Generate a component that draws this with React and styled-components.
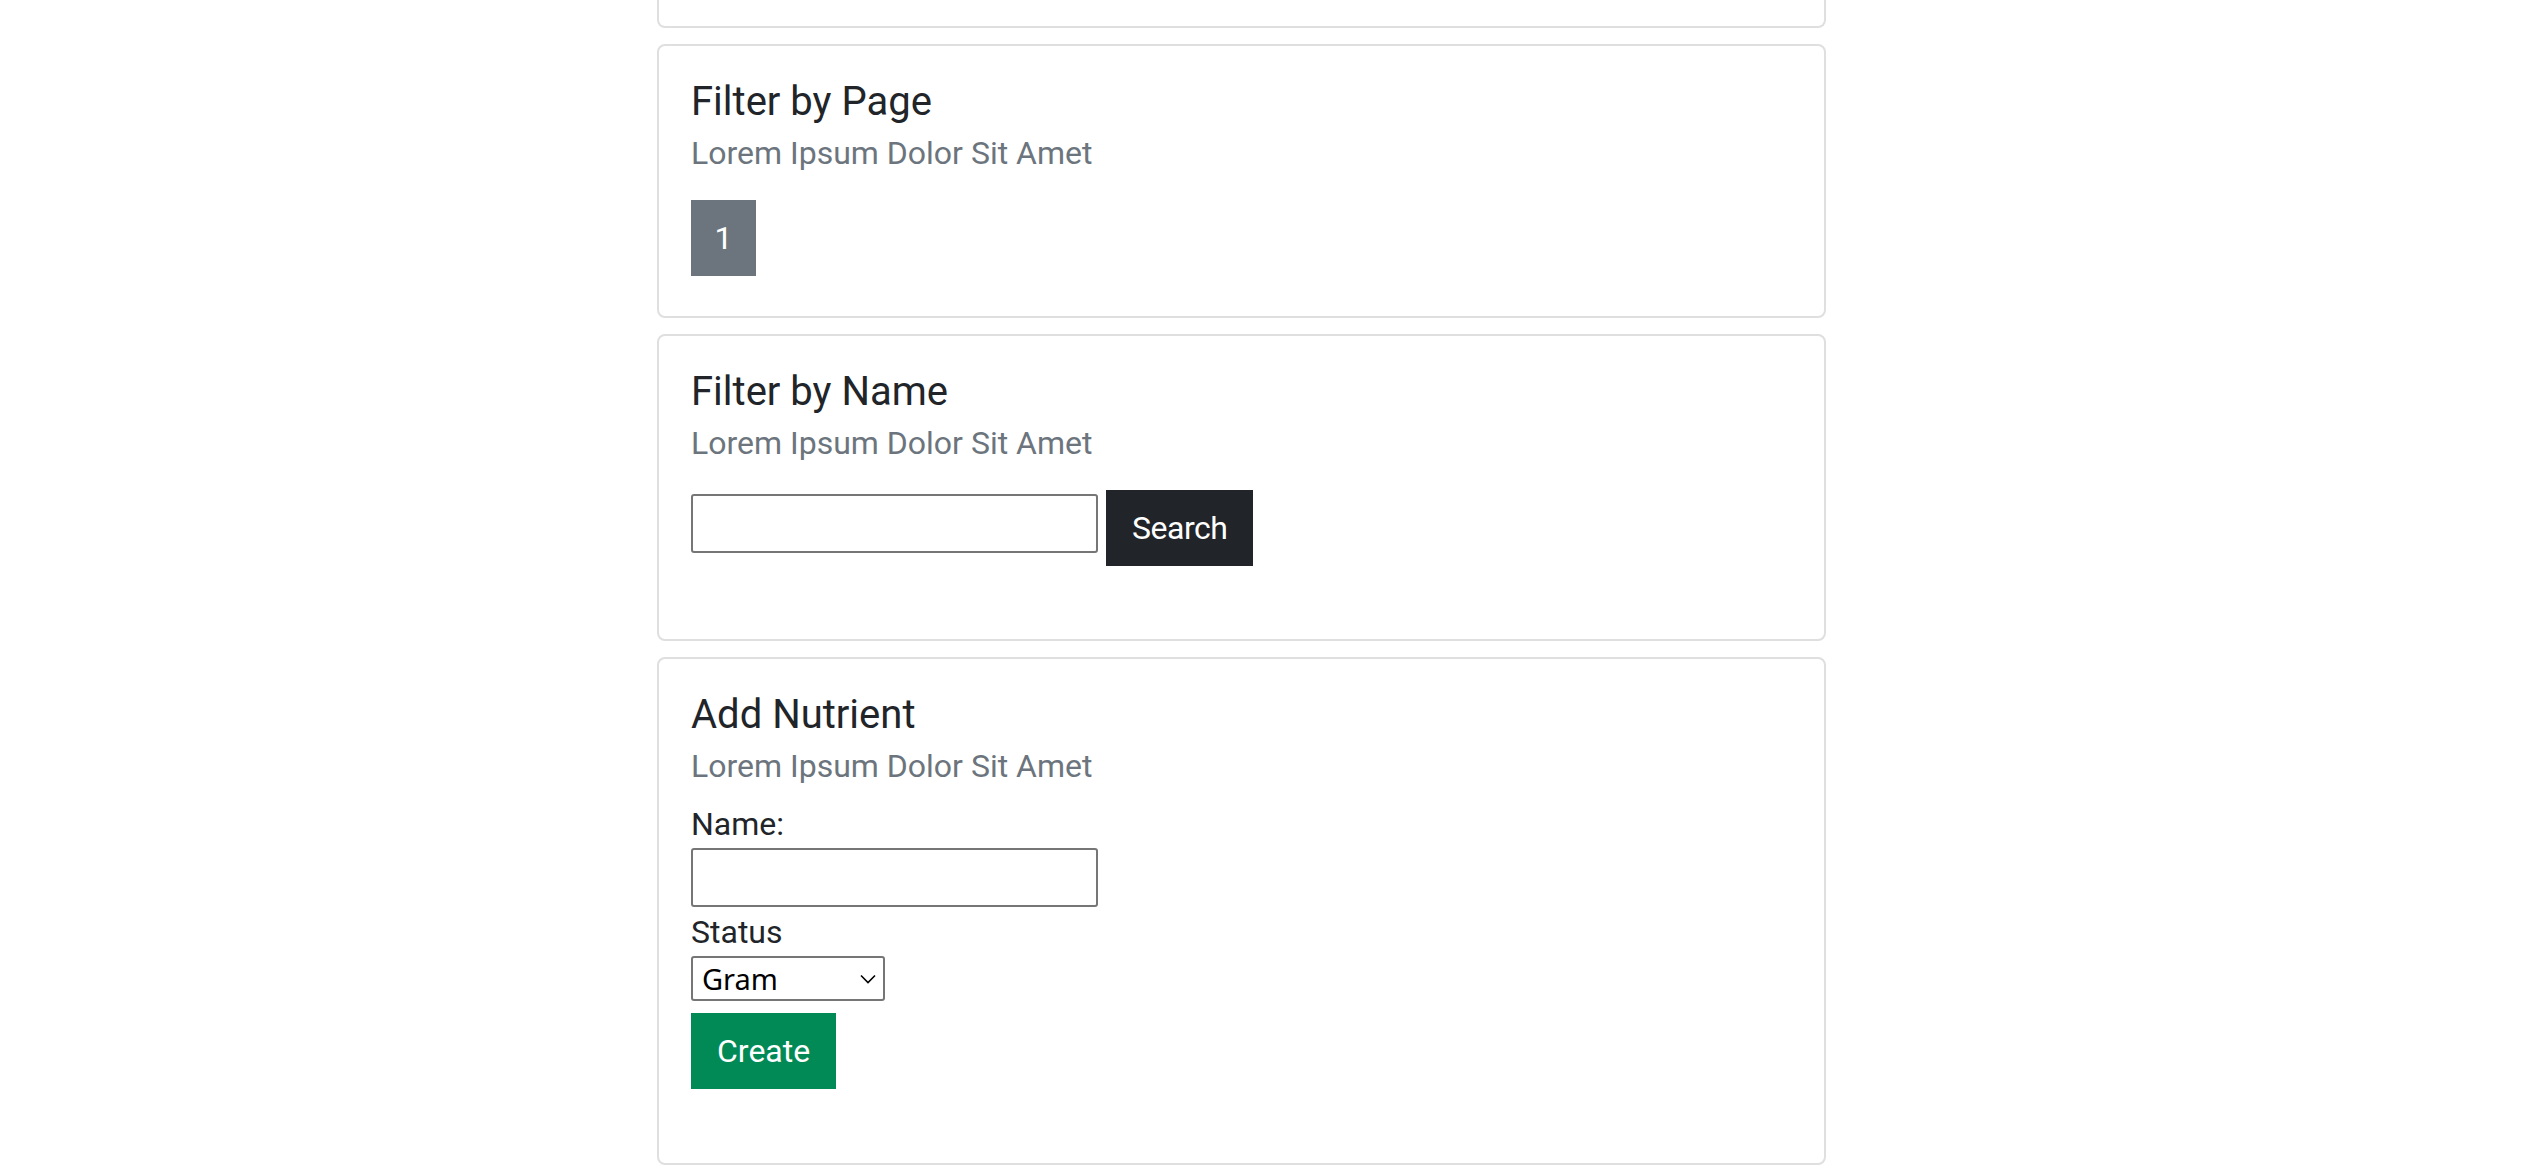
import React from 'react';
import styled, { createGlobalStyle } from 'styled-components';

const GlobalStyle = createGlobalStyle`
  html, body {
    margin: 0;
    padding: 0;
    background: #ffffff;
    overflow: hidden;
  }
  body {
    font-family: Roboto, "Liberation Sans", sans-serif;
    color: #212529;
  }
  *, *::before, *::after {
    box-sizing: border-box;
  }
`;

const Page = styled.main`
  width: 1169px;
  margin-left: 657px;
  display: flex;
  flex-direction: column;
  gap: 16px;
`;

const CardTail = styled.div`
  height: 28px;
  border: 2px solid #dfdfdf;
  border-top: none;
  border-radius: 0 0 8px 8px;
`;

const Card = styled.section`
  border: 2px solid #dfdfdf;
  border-radius: 8px;
  background: #ffffff;
  padding: 32px 32px ${(p) => p.$bottom}px;
`;

const Title = styled.h4`
  margin: 0 0 8px;
  font-size: 40px;
  line-height: 48px;
  font-weight: 400;
  color: #212529;
`;

const Subtitle = styled.h6`
  margin: 0;
  font-size: 32px;
  line-height: 38.4px;
  font-weight: 400;
  color: #6c757d;
`;

const Body = styled.div`
  margin-top: ${(p) => p.$top}px;
  display: flex;
  flex-direction: ${(p) => (p.$column ? 'column' : 'row')};
  align-items: flex-start;
  gap: ${(p) => p.$gap || 0}px;
`;

const Button = styled.button`
  font-family: inherit;
  font-size: 32px;
  line-height: 48px;
  font-weight: 400;
  padding: 12px 24px;
  margin-top: ${(p) => p.$top || 0}px;
  border: 2px solid ${(p) => p.$bg};
  background: ${(p) => p.$bg};
  color: #ffffff;
  border-radius: 0;
  letter-spacing: ${(p) => p.$track || 0}px;
  cursor: pointer;
`;

const PageButton = styled(Button)`
  width: 65px;
  padding: 12px 0;
  text-align: center;
`;

const TextInput = styled.input`
  width: 407px;
  height: 59px;
  margin-top: ${(p) => p.$top || 0}px;
  margin-bottom: ${(p) => p.$bottom || 0}px;
  border: 2px solid #767676;
  border-radius: 3px;
  background: #ffffff;
  font-family: inherit;
  font-size: 26px;
  padding: 0 6px;
`;

const Label = styled.label`
  display: block;
  font-size: 32px;
  line-height: ${(p) => p.$lh || 48}px;
  color: #212529;
`;

const SelectWrap = styled.div`
  position: relative;
  width: 194px;
  height: 45px;
`;

const Select = styled.select`
  appearance: none;
  -webkit-appearance: none;
  width: 100%;
  height: 100%;
  border: 2px solid #767676;
  border-radius: 3px;
  background: #ffffff;
  font-family: "Noto Sans", "DejaVu Sans", sans-serif;
  font-size: 29px;
  color: #000000;
  padding: 0 0 0 9px;
  outline: none;
`;

const Chevron = styled.svg`
  position: absolute;
  right: 9px;
  top: 18px;
  pointer-events: none;
`;

export default function App() {
  return (
    <>
      <GlobalStyle />
      <Page>
        <CardTail />

        <Card $bottom={40}>
          <Title>Filter by Page</Title>
          <Subtitle>Lorem Ipsum Dolor Sit Amet</Subtitle>
          <Body $top={28}>
            <PageButton $bg="#6c757d">1</PageButton>
          </Body>
        </Card>

        <Card $bottom={73}>
          <Title>Filter by Name</Title>
          <Subtitle>Lorem Ipsum Dolor Sit Amet</Subtitle>
          <Body $top={27} $gap={8}>
            <TextInput type="text" $top={4} />
            <Button $bg="#212529" $track={-0.5}>Search</Button>
          </Body>
        </Card>

        <Card $bottom={74}>
          <Title>Add Nutrient</Title>
          <Subtitle>Lorem Ipsum Dolor Sit Amet</Subtitle>
          <Body $top={15} $column>
            <Label htmlFor="nutrient-name">Name:</Label>
            <TextInput id="nutrient-name" type="text" $bottom={2} />
            <Label htmlFor="nutrient-status" $lh={47}>Status</Label>
            <SelectWrap>
              <Select id="nutrient-status" defaultValue="gram">
                <option value="gram">Gram</option>
                <option value="milligram">Milligram</option>
                <option value="microgram">Microgram</option>
              </Select>
              <Chevron width="16" height="10" viewBox="0 0 16 10">
                <path d="M1 1.5 L8 8.5 L15 1.5" fill="none" stroke="#000" strokeWidth="1.6" />
              </Chevron>
            </SelectWrap>
            <Button $bg="#028a56" $top={12}>Create</Button>
          </Body>
        </Card>
      </Page>
    </>
  );
}
